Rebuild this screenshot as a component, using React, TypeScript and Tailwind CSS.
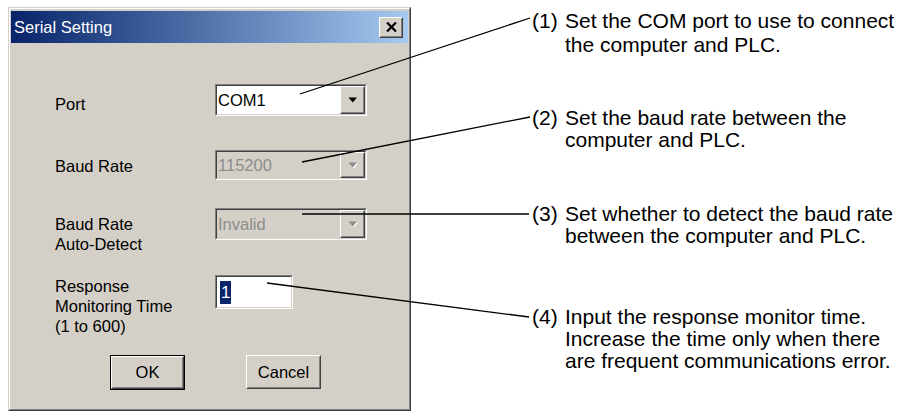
import React from "react";

// Win2000-style bevels
const Raised = ({ className = "", children }: { className?: string; children?: React.ReactNode }) => (
  <div className={`border border-t-white border-l-white border-r-[#404040] border-b-[#404040] ${className}`}>
    <div className="w-full h-full border border-t-[#d4d0c8] border-l-[#d4d0c8] border-r-[#808080] border-b-[#808080] flex items-center justify-center">
      {children}
    </div>
  </div>
);

const Sunken = ({ className = "", inner = "", children }: { className?: string; inner?: string; children?: React.ReactNode }) => (
  <div className={`border border-t-[#808080] border-l-[#808080] border-r-white border-b-white ${className}`}>
    <div className={`w-full h-full border border-t-[#404040] border-l-[#404040] border-r-[#d4d0c8] border-b-[#d4d0c8] flex ${inner}`}>
      {children}
    </div>
  </div>
);

const Arrow = ({ disabled }: { disabled?: boolean }) => (
  <svg width="10" height="7" viewBox="0 0 10 7">
    {disabled && <path d="M1.5 1.5h8.5L5.75 6.5z" fill="#ffffff" />}
    <path d="M0.5 0.5h8.5L4.75 5.5z" fill={disabled ? "#8c8c8c" : "#000000"} />
  </svg>
);

const Combo = ({ value, disabled, h }: { value: string; disabled?: boolean; h: string }) => (
  <Sunken className={`w-[152px] ${h}`} inner={disabled ? "bg-[#d4d0c8]" : "bg-white"}>
    <div className={`flex-1 flex items-center pl-[1px] text-[16.5px] ${disabled ? "text-[#8c8c8c]" : "text-black"}`}>
      {value}
    </div>
    <Raised className="w-[25px] h-full bg-[#d4d0c8]">
      <Arrow disabled={disabled} />
    </Raised>
  </Sunken>
);

const notes = [
  { n: "(1)", lines: ["Set the COM port to use to connect", "the computer and PLC."], mt: "mt-[9px]", lh: "leading-[24px]" },
  { n: "(2)", lines: ["Set the baud rate between the", "computer and PLC."], mt: "mt-[50px]", lh: "leading-[22px]" },
  { n: "(3)", lines: ["Set whether to detect the baud rate", "between the computer and PLC."], mt: "mt-[52px]", lh: "leading-[22px]" },
  { n: "(4)", lines: ["Input the response monitor time.", "Increase the time only when there", "are frequent communications error."], mt: "mt-[59px]", lh: "leading-[22px]" },
];

export default function App() {
  return (
    <div className="relative w-[903px] h-[412px] bg-white overflow-hidden flex" style={{ fontFamily: '"Liberation Sans", Arial, sans-serif' }}>
      {/* dialog */}
      <div className="ml-[8px] mt-[7px] w-[403px] h-[404px] border border-t-[#d4d0c8] border-l-[#d4d0c8] border-r-[#404040] border-b-[#404040] shrink-0">
        <div className="w-full h-full border border-t-white border-l-white border-r-[#808080] border-b-[#808080] bg-[#d4d0c8] p-[1px] pt-[2px] flex flex-col">
          <div className="h-[32px] flex items-center justify-between pl-[3px] pr-[5px] bg-gradient-to-r from-[#0a246a] to-[#a6caf0]">
            <span className="text-white text-[16.5px]">Serial Setting</span>
            <Raised className="w-[24px] h-[21px] bg-[#d4d0c8]">
              <svg width="11" height="10" viewBox="0 0 11 10">
                <path d="M1 0.5L10 9.5M10 0.5L1 9.5" stroke="#000" strokeWidth="2.2" />
              </svg>
            </Raised>
          </div>

          <div className="flex-1 flex flex-col pl-[44px] text-[16.5px] text-black">
            <div className="mt-[41px] flex items-start h-[32px]">
              <div className="w-[160px] pt-[10px] leading-[20px]">Port</div>
              <Combo value="COM1" h="h-[32px]" />
            </div>
            <div className="mt-[34px] flex items-start h-[30px]">
              <div className="w-[160px] pt-[6px] leading-[20px]">Baud Rate</div>
              <Combo value="115200" disabled h="h-[30px]" />
            </div>
            <div className="mt-[28px] flex items-start h-[32px]">
              <div className="w-[160px] pt-[6px] leading-[20px]">
                Baud Rate
                <br />
                Auto-Detect
              </div>
              <Combo value="Invalid" disabled h="h-[32px]" />
            </div>
            <div className="mt-[35px] flex items-start h-[62px]">
              <div className="w-[160px] pt-[1px] leading-[20px]">
                Response
                <br />
                Monitoring Time
                <br />
                (1 to 600)
              </div>
              <Sunken className="w-[78px] h-[34px]" inner="bg-white items-center pl-[3px]">
                <span className="bg-[#0a246a] text-white px-[1px] leading-[23px] text-[17px]">1</span>
              </Sunken>
            </div>
            <div className="mt-[18px] flex pl-[55px] gap-[61px]">
              <div className="border border-black w-[75px] h-[35px]">
                <Raised className="w-full h-full">OK</Raised>
              </div>
              <Raised className="w-[75px] h-[34px]">Cancel</Raised>
            </div>
          </div>
        </div>
      </div>

      {/* annotations */}
      <div className="ml-[121px] flex flex-col text-[21px] text-black">
        {notes.map((note) => (
          <div key={note.n} className={`flex whitespace-nowrap ${note.mt} ${note.lh}`}>
            <span className="w-[33px] shrink-0">{note.n}</span>
            <div>
              {note.lines.map((l) => (
                <div key={l}>{l}</div>
              ))}
            </div>
          </div>
        ))}
      </div>

      {/* leader lines */}
      <svg className="absolute inset-0 pointer-events-none" width="903" height="412">
        <g stroke="#000" strokeWidth="1.3" fill="none">
          <line x1="300" y1="94" x2="530" y2="18" />
          <line x1="302" y1="162" x2="530" y2="117" />
          <line x1="302" y1="214" x2="529" y2="214" />
          <line x1="267" y1="283" x2="529" y2="317" />
        </g>
      </svg>
    </div>
  );
}
